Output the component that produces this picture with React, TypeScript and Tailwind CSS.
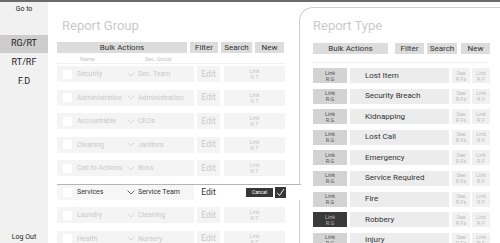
import React from "react";

const groups = [
  { name: "Security", group: "Sec. Team" },
  { name: "Administrative", group: "Administration" },
  { name: "Accountable", group: "CEOs" },
  { name: "Cleaning", group: "Janitors" },
  { name: "Call to Actions", group: "Boss" },
  { name: "Services", group: "Service Team", active: true },
  { name: "Laundry", group: "Cleaning" },
  { name: "Health", group: "Nursery" },
];

const types = [
  "Lost Item",
  "Security Breach",
  "Kidnapping",
  "Lost Call",
  "Emergency",
  "Service Required",
  "Fire",
  "Robbery",
  "Injury",
];

function Chevron({ dark }: { dark?: boolean }) {
  return (
    <svg width="8" height="5" viewBox="0 0 8 5" className="shrink-0">
      <path d="M0.5 0.5 L4 4 L7.5 0.5" fill="none" stroke={dark ? "#444" : "#cfcfcf"} strokeWidth="0.8" />
    </svg>
  );
}

function Tiny({ a, b, cls }: { a: string; b: string; cls: string }) {
  return (
    <div className={"shrink-0 flex flex-col items-center justify-center leading-[6px] text-[5.5px] " + cls}>
      <span>{a}</span>
      <span>{b}</span>
    </div>
  );
}

export default function App() {
  return (
    <div
      className="w-[500px] h-[243px] overflow-hidden bg-white border-t-[2px] border-[#6b6b6b] flex"
      style={{ fontFamily: "Roboto, 'Liberation Sans', sans-serif" }}
    >
      {/* Sidebar */}
      <div className="w-[48px] shrink-0 h-full bg-[#f1f1f1] flex flex-col items-stretch text-[#222]">
        <div className="text-[7px] text-center mt-[3px] leading-[9px]">Go to</div>
        <div className="mt-[21px] h-[18px] bg-[#cdcdcd] flex items-center justify-center text-[9px]">RG/RT</div>
        <div className="h-[19px] flex items-center justify-center text-[9px]">RT/RF</div>
        <div className="h-[19px] flex items-center justify-center text-[9px]">F.D</div>
        <div className="flex-1" />
        <div className="text-[7px] text-center mb-[1px] leading-[9px]">Log Out</div>
      </div>

      {/* Left: Report Group */}
      <div className="w-[251px] shrink-0 h-full pl-[9px] flex flex-col relative z-10">
        <div className="ml-[5px] mt-[15px] text-[13px] leading-[17px] text-[#c9c9c9]">Report Group</div>
        <div className="mt-[8px] flex gap-[3px] h-[11px] text-[8px] text-[#333] leading-[11px]">
          <div className="w-[130px] bg-[#dcdcdc] text-center">Bulk Actions</div>
          <div className="w-[28px] bg-[#dcdcdc] text-center">Filter</div>
          <div className="w-[31px] bg-[#dcdcdc] text-center">Search</div>
          <div className="w-[29px] bg-[#dcdcdc] text-center">New</div>
        </div>
        <div className="mt-[2px] w-[228px] h-[11px] border-b border-[#f0f0f0] flex items-center text-[5.5px] text-[#c4c4c4]">
          <span className="ml-[23px] w-[65px]">Name</span>
          <span>Sec. Group</span>
        </div>
        <div className="mt-[2px] flex flex-col gap-[7.5px]">
          {groups.map((g) =>
            g.active ? (
              <div
                key={g.name}
                className="h-[16px] -mr-[2px] flex items-center bg-white border-t border-[#b5b5b5] text-[#333]"
              >
                <div className="w-[137px] shrink-0 h-full flex items-center bg-[#f6f6f6]">
                  <div className="ml-[6px] w-[9px] h-[9px] bg-white" />
                  <span className="ml-[5px] w-[50px] text-[7px]">{g.name}</span>
                  <Chevron dark />
                  <span className="ml-[3px] text-[7px] whitespace-nowrap">{g.group}</span>
                </div>
                <div className="ml-[3px] w-[23px] shrink-0 flex items-center justify-center text-[8.5px]">Edit</div>
                <div className="ml-[26px] w-[27px] h-[9px] shrink-0 bg-[#363636] text-white text-[5px] flex items-center justify-center">
                  Cancel
                </div>
                <div className="ml-[2px] w-[11px] h-[11px] shrink-0 bg-[#363636] flex items-center justify-center">
                  <svg width="9" height="9" viewBox="0 0 9 9">
                    <path d="M1.2 4.8 L3.5 7.5 L8 1" fill="none" stroke="#fff" strokeWidth="0.9" />
                  </svg>
                </div>
              </div>
            ) : (
              <div key={g.name} className="h-[16px] flex items-center text-[#c9c9c9]">
                <div className="w-[137px] shrink-0 h-full flex items-center bg-[#f4f4f4]">
                  <div className="ml-[6px] w-[9px] h-[9px] bg-white" />
                  <span className="ml-[5px] w-[50px] text-[7px] whitespace-nowrap">{g.name}</span>
                  <Chevron />
                  <span className="ml-[3px] text-[7px] whitespace-nowrap">{g.group}</span>
                </div>
                <div className="ml-[3px] w-[23px] shrink-0 h-full bg-[#f4f4f4] flex items-center justify-center text-[8.5px]">
                  Edit
                </div>
                <Tiny a="Link" b="R.T" cls="ml-[4px] w-[61px] h-full bg-[#f4f4f4] text-[#c9c9c9]" />
              </div>
            )
          )}
        </div>
      </div>

      {/* Right: Report Type */}
      <div className="flex-1 mt-[5px] rounded-tl-[14px] border-l border-t border-[#cfcfcf] bg-white pl-[13px] flex flex-col">
        <div className="mt-[9px] text-[13px] leading-[17px] text-[#c9c9c9]">Report Type</div>
        <div className="mt-[9px] flex h-[11px] text-[8px] text-[#333] leading-[11px]">
          <div className="w-[75px] shrink-0 bg-[#dcdcdc] text-center">Bulk Actions</div>
          <div className="ml-[7px] w-[29px] shrink-0 bg-[#dcdcdc] text-center">Filter</div>
          <div className="ml-[3px] w-[30px] shrink-0 bg-[#dcdcdc] text-center">Search</div>
          <div className="ml-[4px] w-[29px] shrink-0 bg-[#dcdcdc] text-center">New</div>
        </div>
        <div className="mt-[8px] w-[174px] border-t border-[#efefef]" />
        <div className="mt-[5px] flex flex-col gap-[5.6px]">
          {types.map((t) => (
            <div key={t} className="h-[15px] flex shrink-0">
              <Tiny
                a="Link"
                b="R.G"
                cls={
                  "w-[34px] h-full " +
                  (t === "Robbery" ? "bg-[#3a3a3a] text-[#b0b0b0]" : "bg-[#d3d3d3] text-[#555]")
                }
              />
              <div className="ml-[3px] w-[99px] shrink-0 h-full bg-[#ececec] flex items-center pl-[15px] text-[8px] text-[#333]">
                {t}
              </div>
              <Tiny a="See" b="R.Fs" cls="ml-[3px] w-[18px] h-full bg-[#f1f1f1] text-[#bdbdbd]" />
              <Tiny a="Link" b="R.F" cls="ml-[2px] w-[18px] h-full bg-[#f1f1f1] text-[#bdbdbd]" />
            </div>
          ))}
        </div>
      </div>
    </div>
  );
}
